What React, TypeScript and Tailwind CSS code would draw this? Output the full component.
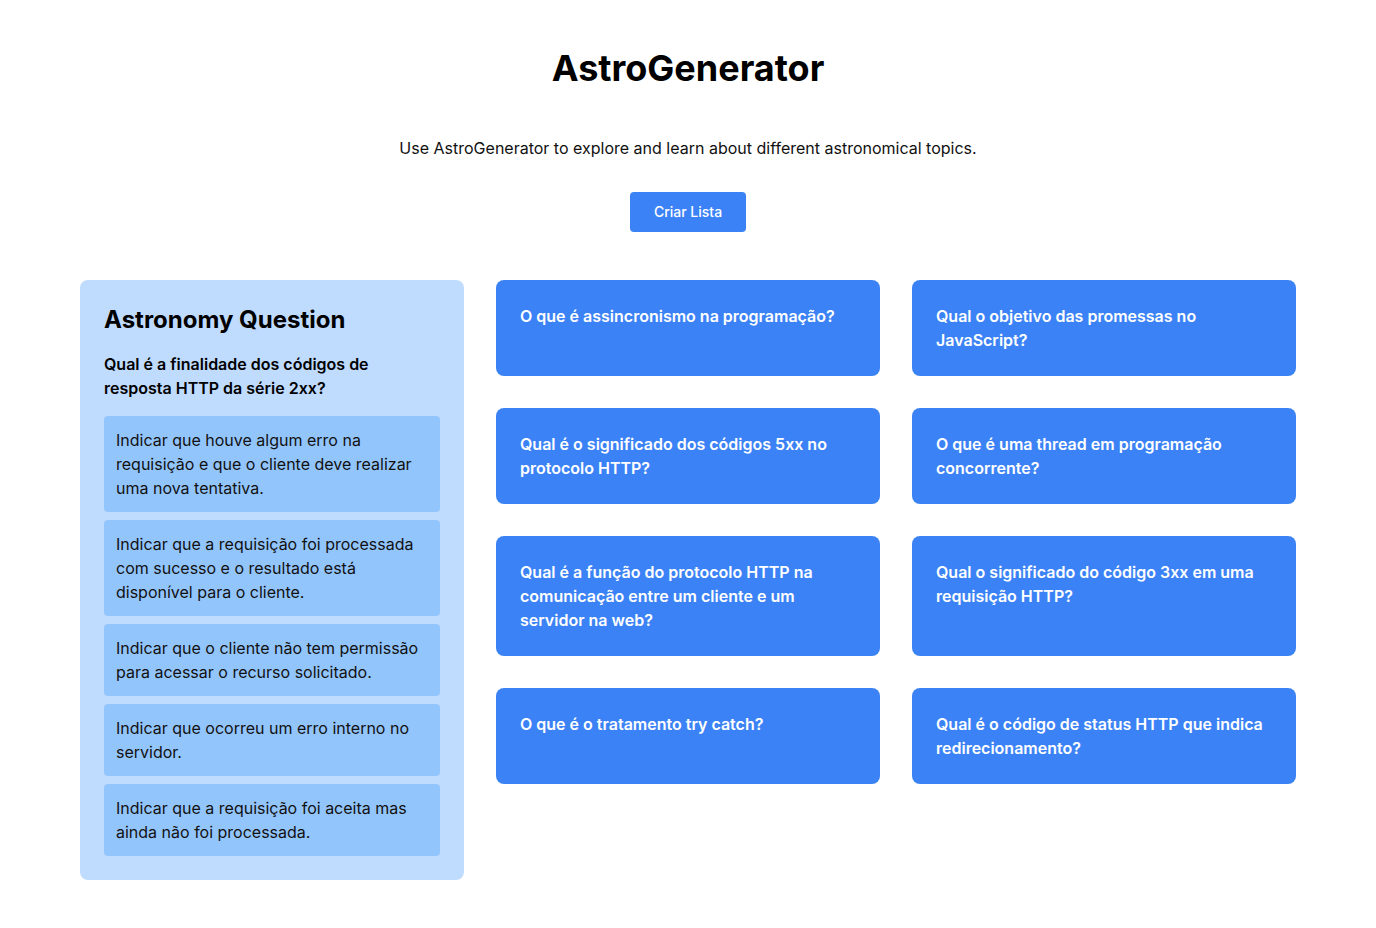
import { FC } from "react";

const options = [
  "Indicar que houve algum erro na requisição e que o cliente deve realizar uma nova tentativa.",
  "Indicar que a requisição foi processada com sucesso e o resultado está disponível para o cliente.",
  "Indicar que o cliente não tem permissão para acessar o recurso solicitado.",
  "Indicar que ocorreu um erro interno no servidor.",
  "Indicar que a requisição foi aceita mas ainda não foi processada.",
];

const questions = [
  "O que é assincronismo na programação?",
  "Qual o objetivo das promessas no JavaScript?",
  "Qual é o significado dos códigos 5xx no protocolo HTTP?",
  "O que é uma thread em programação concorrente?",
  "Qual é a função do protocolo HTTP na comunicação entre um cliente e um servidor na web?",
  "Qual o significado do código 3xx em uma requisição HTTP?",
  "O que é o tratamento try catch?",
  "Qual é o código de status HTTP que indica redirecionamento?",
];

const QuestionCard: FC<{ text: string }> = ({ text }) => (
  <div className="bg-[#3b82f6] text-white font-semibold rounded-lg p-6 leading-6">
    {text}
  </div>
);

export default function App() {
  return (
    <div
      className="min-h-screen bg-white text-black"
      style={{ fontFamily: "Inter, 'Noto Sans', sans-serif" }}
    >
      <div className="max-w-7xl mx-auto px-8 pt-12 pb-12">
        <h1 className="text-4xl font-bold text-center leading-10">AstroGenerator</h1>
        <p className="text-center mt-12 text-base leading-6 text-[#111]">
          Use AstroGenerator to explore and learn about different astronomical topics.
        </p>
        <div className="flex justify-center mt-8">
          <button className="bg-[#3b82f6] text-white text-sm font-medium px-6 h-10 rounded">
            Criar Lista
          </button>
        </div>

        <div className="grid grid-cols-3 gap-8 mt-12 items-start">
          <div className="bg-[#bfdbfe] rounded-lg p-6">
            <h2 className="text-2xl font-bold leading-8">Astronomy Question</h2>
            <p className="font-semibold mt-4 leading-6">
              Qual é a finalidade dos códigos de resposta HTTP da série 2xx?
            </p>
            <div className="flex flex-col gap-2 mt-4">
              {options.map((o) => (
                <div key={o} className="bg-[#93c5fd] rounded p-3 leading-6 text-[#111]">
                  {o}
                </div>
              ))}
            </div>
          </div>
          <div className="col-span-2 grid grid-cols-2 gap-8">
            {questions.map((q) => (
              <QuestionCard key={q} text={q} />
            ))}
          </div>
        </div>
      </div>
    </div>
  );
}
